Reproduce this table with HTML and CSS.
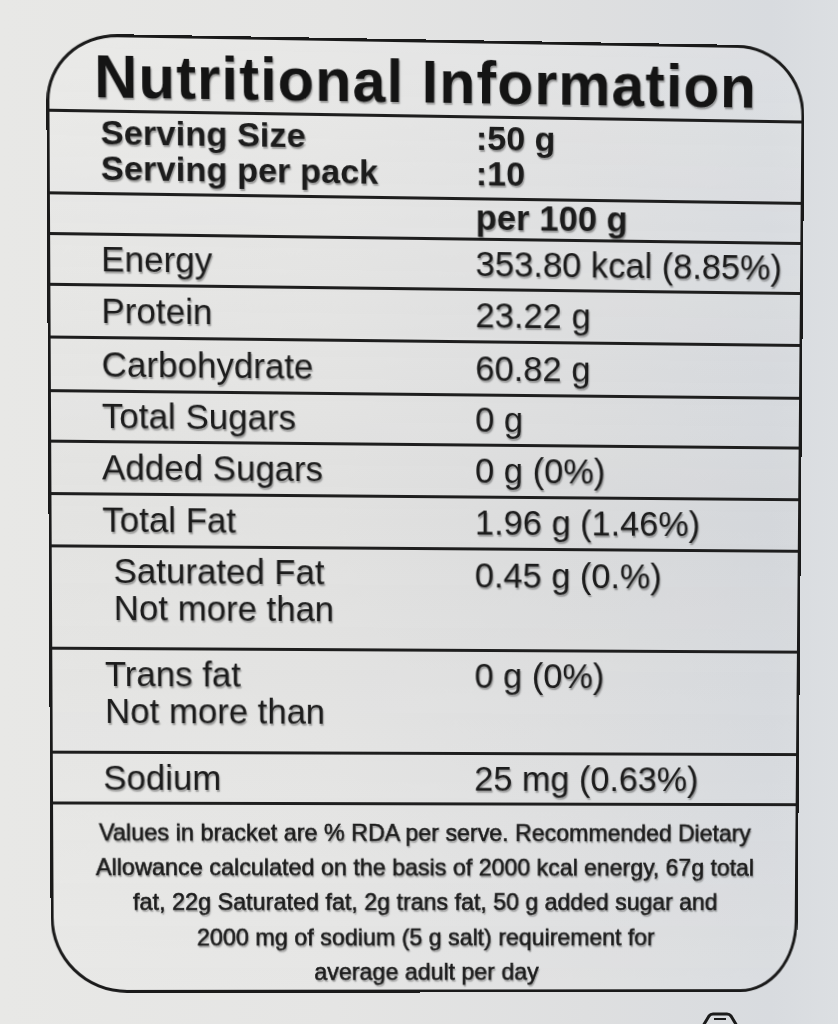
FILE: index.html
```html
<!DOCTYPE html>
<html lang="en">
<head>
<meta charset="utf-8">
<title>Nutritional Information</title>
<link rel="stylesheet" href="styles.css">
</head>
<body>
<div class="label">
  <div class="row title">Nutritional Information</div>
  <div class="row grid serving">
    <div class="lbl"><div class="ln">Serving Size</div><div class="ln">Serving per pack</div></div>
    <div class="val"><div class="ln">:50 g</div><div class="ln">:10</div></div>
  </div>
  <div class="row grid per">
    <div class="lbl"></div>
    <div class="val">per 100 g</div>
  </div>
  <div class="row grid one h47">
    <div class="lbl">Energy</div>
    <div class="val">353.80 kcal (8.85%)</div>
  </div>
  <div class="row grid one h49">
    <div class="lbl">Protein</div>
    <div class="val">23.22 g</div>
  </div>
  <div class="row grid one h50">
    <div class="lbl">Carbohydrate</div>
    <div class="val">60.82 g</div>
  </div>
  <div class="row grid one h47">
    <div class="lbl">Total Sugars</div>
    <div class="val">0 g</div>
  </div>
  <div class="row grid one h49">
    <div class="lbl">Added Sugars</div>
    <div class="val">0 g (0%)</div>
  </div>
  <div class="row grid one h49">
    <div class="lbl">Total Fat</div>
    <div class="val">1.96 g (1.46%)</div>
  </div>
  <div class="row grid two sat">
    <div class="lbl indent">Saturated Fat<br>Not more than</div>
    <div class="val">0.45 g (0.%)</div>
  </div>
  <div class="row grid two trans">
    <div class="lbl indent-s">Trans fat<br>Not more than</div>
    <div class="val">0 g (0%)</div>
  </div>
  <div class="row grid one h48">
    <div class="lbl">Sodium</div>
    <div class="val">25 mg (0.63%)</div>
  </div>
  <div class="row footer">
    Values in bracket are % RDA per serve. Recommended Dietary<br>
    Allowance calculated on the basis of 2000 kcal energy, 67g total<br>
    fat, 22g Saturated fat, 2g trans fat, 50 g added sugar and<br>
    2000 mg of sodium (5 g salt) requirement for<br>
    average adult per day
  </div>
</div>
<svg class="logo" width="40" height="14" viewBox="0 0 40 14" aria-hidden="true">
  <path d="M3 14 L9 4 Q10.5 2 13 2 L27 2 Q29.5 2 31 4 L37 14" fill="none" stroke="#1b1b1b" stroke-width="3" stroke-linejoin="round"/>
  <path d="M14 7 L26 7" stroke="#1b1b1b" stroke-width="2"/>
</svg>
</body>
</html>
```

FILE: styles.css
```css
html, body {
  margin: 0;
  padding: 0;
}

body {
  width: 838px;
  height: 1024px;
  overflow: hidden;
  position: relative;
  background: linear-gradient(90deg, #e8e8e6 0%, #e5e5e4 40%, #dedfe0 70%, #d8dbdf 92%, #dcdfe2 100%);
  font-family: "Liberation Sans", Arial, Helvetica, sans-serif;
  color: #1c1c1c;
}

.label {
  box-sizing: border-box;
  width: 753px;
  height: 954px;
  margin: 39px 0 0 48px;
  border: 3px solid #1a1a1a;
  border-radius: 70px 68px 58px 76px / 66px 70px 72px 76px;
  transform-origin: 0 0;
  transform: matrix3d(1.022864, 0.0174025, 0, 0.000019679,
                      0.0052965, 1.023874, 0, 0.000018433,
                      0, 0, 1, 0,
                      -2, -6, 0, 1);
  background: linear-gradient(180deg, rgba(255,255,255,0.10), rgba(0,0,0,0.015) 50%, rgba(255,255,255,0.06));
  text-shadow: 1px 1.5px 1.5px rgba(0, 0, 0, 0.34);
}

.row {
  border-bottom: 3px solid #1e1e1e;
}

.title {
  height: 61px;
  padding: 10px 0 0 44px;
  font-weight: 700;
  font-size: 58.5px;
  line-height: 58.5px;
  letter-spacing: 1.2px;
  color: #141414;
  white-space: nowrap;
}

.grid {
  display: grid;
  grid-template-columns: 371px 1fr;
  padding-left: 50px;
  font-size: 34.6px;
  white-space: nowrap;
}

.one {
  align-items: center;
  line-height: 35px;
}

.h47 { height: 47px; }
.h48 { height: 48px; }
.h49 { height: 49px; }
.h50 { height: 50px; }

.serving {
  height: 76px;
  padding-top: 2px;
  font-weight: 700;
  font-size: 34px;
}

.serving .ln {
  height: 35.3px;
  line-height: 35.3px;
}

.per {
  height: 37px;
  font-weight: 700;
  line-height: 34px;
}

.two {
  align-items: start;
  line-height: 36.8px;
}

.sat {
  height: 94px;
  padding-top: 5px;
}

.trans {
  height: 95px;
  padding-top: 6px;
}

.indent {
  padding-left: 11px;
}

.indent-s {
  padding-left: 2px;
}

.sat .val {
  padding-top: 2px;
}

.footer {
  border-bottom: none;
  height: 176px;
  padding-top: 11px;
  text-align: center;
  font-size: 23.4px;
  line-height: 35.2px;
  -webkit-text-stroke: 0.55px #1c1c1c;
  white-space: nowrap;
}

.logo {
  position: absolute;
  left: 700px;
  top: 1012px;
}
```
